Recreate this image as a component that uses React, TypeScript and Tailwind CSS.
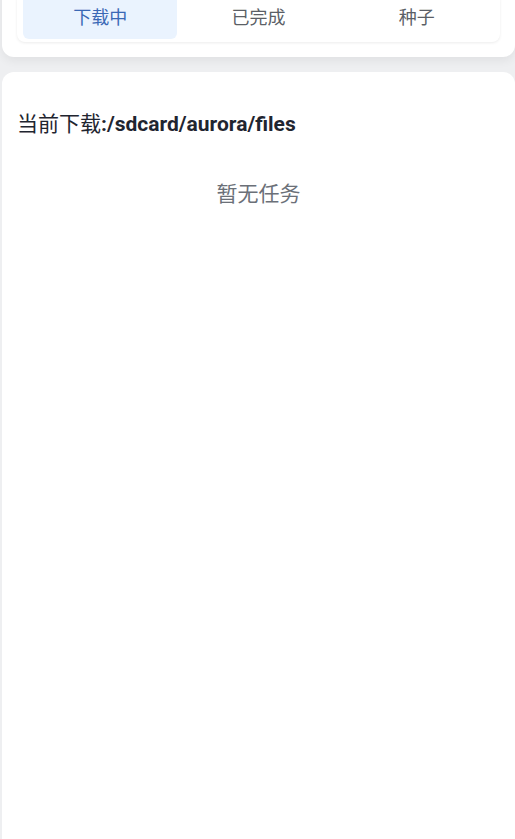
const tabs = ["下载中", "已完成", "种子"];

export default function App() {
  return (
    <div
      className="min-h-[839px] overflow-hidden bg-[#eeeff1] pl-[2px]"
      style={{ fontFamily: 'Roboto, "Noto Sans CJK SC", sans-serif' }}
    >
      <div className="-mt-[23px] rounded-xl bg-white px-[15px] pb-[15px] pt-[15px] shadow-[0_4px_10px_rgba(0,0,0,0.06)]">
        <div className="grid grid-cols-3 gap-[4px] rounded-lg bg-white px-[6px] py-[3px] shadow-[0_1px_3px_rgba(0,0,0,0.08)]">
          {tabs.map((t, i) => (
            <div
              key={t}
              className={
                i === 0
                  ? "flex h-[44px] items-center justify-center rounded-md bg-[#eaf3fe] text-[18px] text-[#3a68b5]"
                  : "flex h-[44px] items-center justify-center text-[18px] text-[#5b5f66]"
              }
            >
              {t}
            </div>
          ))}
        </div>
      </div>

      <div className="mt-[15px] min-h-[780px] rounded-xl bg-white px-[15px] pt-[38px]">
        <h2 className="text-[21px] leading-[28px] text-[#1f2530]">
          当前下载<span className="font-bold">:/sdcard/aurora/files</span>
        </h2>
        <p className="mt-[42px] text-center text-[21px] leading-[28px] text-[#6b7078]">
          暂无任务
        </p>
      </div>
    </div>
  );
}
